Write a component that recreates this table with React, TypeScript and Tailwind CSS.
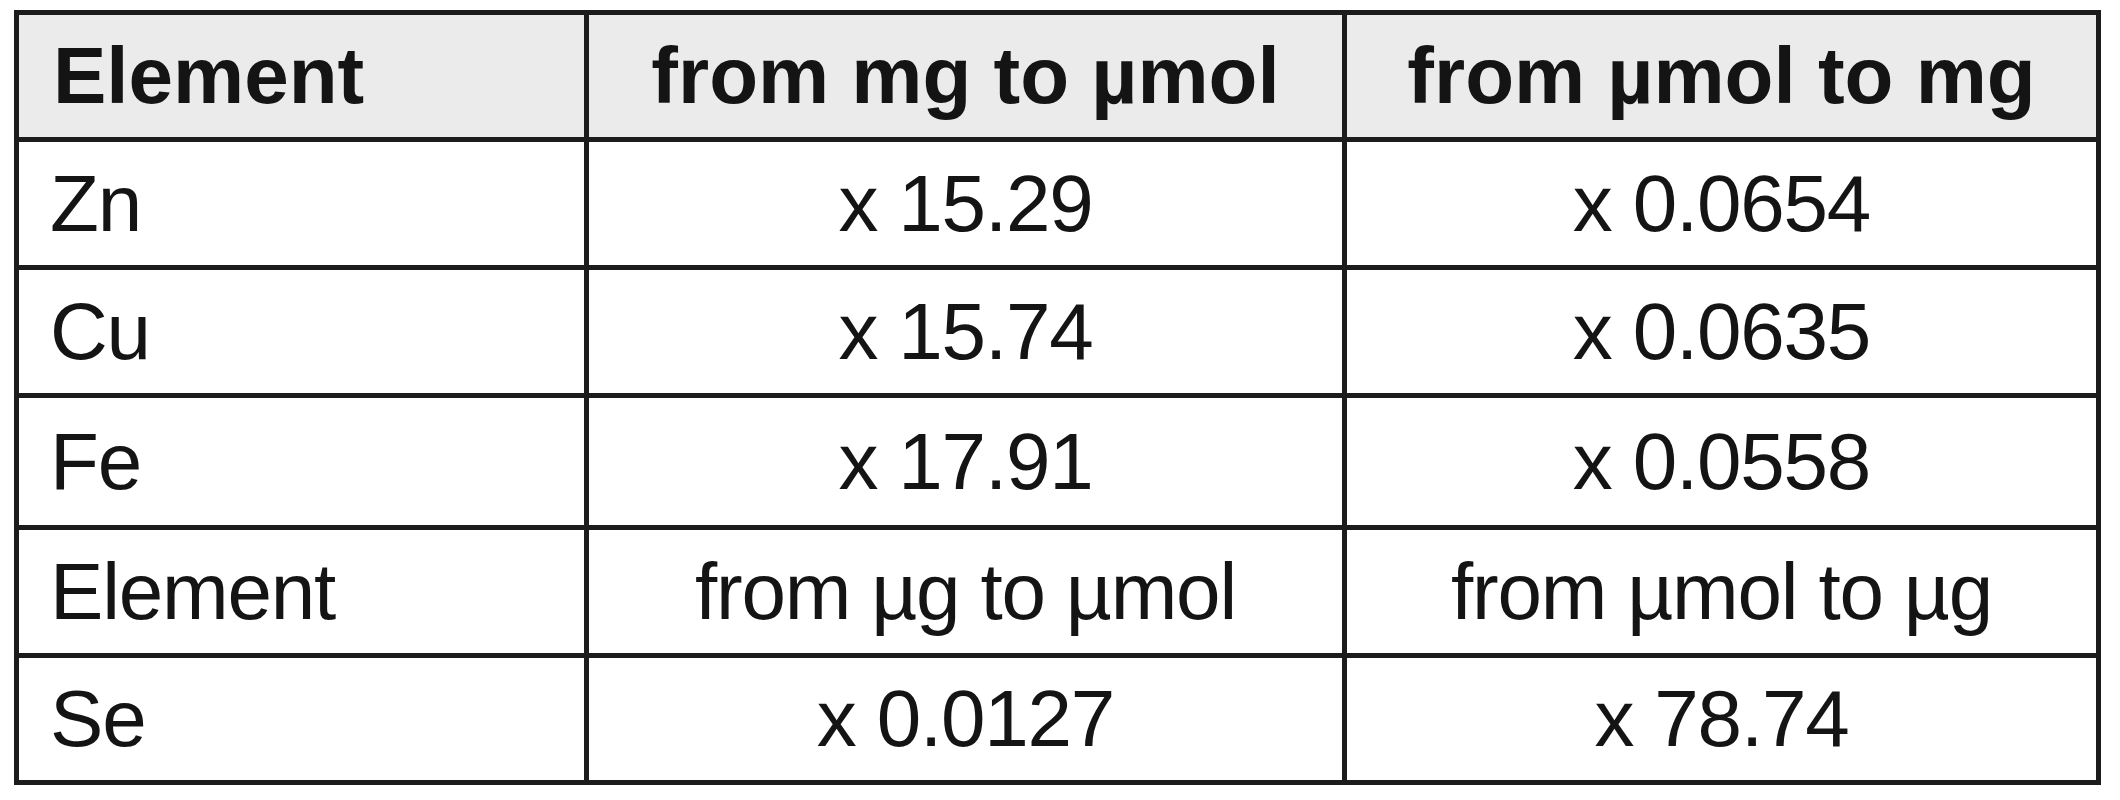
const ROWS = [
  { el: 'Zn', a: 'x 15.29', b: 'x 0.0654', h: 'h-[128px]' },
  { el: 'Cu', a: 'x 15.74', b: 'x 0.0635', h: 'h-[128px]' },
  { el: 'Fe', a: 'x 17.91', b: 'x 0.0558', h: 'h-[132px]' },
  { el: 'Element', a: 'from µg to µmol', b: 'from µmol to µg', h: 'h-[128px]' },
  { el: 'Se', a: 'x 0.0127', b: 'x 78.74', h: 'h-[122px]' },
]

export default function App() {
  return (
    <div className="w-[2120px] h-[800px] bg-white pt-[10px] pl-[14px]">
      <div
        className="w-[2087px] border-[5px] border-[#1c1c1c] text-[80px] leading-none text-[#141414]"
        style={{ fontFamily: '"Liberation Sans", Arial, sans-serif' }}
      >
        {/* header */}
        <div className="grid grid-cols-[570px_758px_1fr] h-[127px] border-b-[5px] border-[#1c1c1c] bg-[#ebebeb] font-bold">
          <div className="flex items-center pl-[34px] border-r-[5px] border-[#1c1c1c]">Element</div>
          <div className="flex items-center justify-center border-r-[5px] border-[#1c1c1c]">from mg to µmol</div>
          <div className="flex items-center justify-center">from µmol to mg</div>
        </div>

        {ROWS.map((r, i) => (
          <div
            key={i}
            className={`grid grid-cols-[570px_758px_1fr] ${r.h} ${i < ROWS.length - 1 ? 'border-b-[5px]' : ''} border-[#1c1c1c] tracking-[-0.015em]`}
          >
            <div className="flex items-center pl-[31px] border-r-[5px] border-[#1c1c1c]">{r.el}</div>
            <div className="flex items-center justify-center border-r-[5px] border-[#1c1c1c]">{r.a}</div>
            <div className="flex items-center justify-center">{r.b}</div>
          </div>
        ))}
      </div>
    </div>
  )
}
